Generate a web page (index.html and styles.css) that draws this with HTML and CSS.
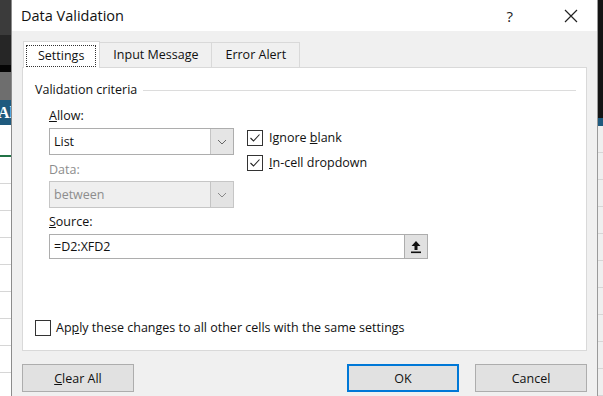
FILE: index.html
```html
<!DOCTYPE html>
<html lang="en">
<head>
    <meta charset="UTF-8">
    <title>Data Validation</title>
    <link rel="stylesheet" href="styles.css">
</head>
<body>
    <div class="screen">
        <div class="sheet sheet-left">
            <div class="band band-dark"></div>
            <div class="band band-black"></div>
            <div class="band band-line"></div>
            <div class="band band-gray"></div>
            <div class="band band-blue">Al</div>
            <div class="cells">
                <div class="cell cell-green"></div>
                <div class="cell"></div>
                <div class="cell"></div>
                <div class="cell"></div>
                <div class="cell"></div>
                <div class="cell"></div>
                <div class="cell"></div>
                <div class="cell"></div>
                <div class="cell"></div>
            </div>
        </div>

        <div class="dialog">
            <div class="titlebar">
                <span class="title">Data Validation</span>
                <div class="title-buttons">
                    <span class="help">?</span>
                    <svg class="close" width="14" height="14" viewBox="0 0 14 14">
                        <path d="M1 1L13 13M13 1L1 13" stroke="#222" stroke-width="1.2" fill="none"/>
                    </svg>
                </div>
            </div>

            <div class="dialog-body">
                <div class="tabs">
                    <div class="tab active"><span class="focus">Settings</span></div>
                    <div class="tab">Input Message</div>
                    <div class="tab">Error Alert</div>
                </div>

                <div class="panel">
                    <div class="group-title">
                        <span>Validation criteria</span>
                        <div class="rule"></div>
                    </div>

                    <div class="criteria">
                        <div class="fields">
                            <div class="label"><u>A</u>llow:</div>
                            <div class="combo">
                                <span class="combo-value">List</span>
                                <span class="combo-btn">
                                    <svg width="10" height="6" viewBox="0 0 10 6"><path d="M1 1L5 5L9 1" stroke="#666" fill="none"/></svg>
                                </span>
                            </div>
                            <div class="label label-data disabled">Data:</div>
                            <div class="combo combo-disabled">
                                <span class="combo-value">between</span>
                                <span class="combo-btn">
                                    <svg width="10" height="6" viewBox="0 0 10 6"><path d="M1 1L5 5L9 1" stroke="#888" fill="none"/></svg>
                                </span>
                            </div>
                        </div>
                        <div class="options">
                            <label class="check-row">
                                <span class="box">
                                    <svg width="12" height="12" viewBox="0 0 12 12"><path d="M1.5 6L4.5 9L10.5 2.5" stroke="#222" stroke-width="1.1" fill="none"/></svg>
                                </span>
                                <span>Ignore <u>b</u>lank</span>
                            </label>
                            <label class="check-row">
                                <span class="box">
                                    <svg width="12" height="12" viewBox="0 0 12 12"><path d="M1.5 6L4.5 9L10.5 2.5" stroke="#222" stroke-width="1.1" fill="none"/></svg>
                                </span>
                                <span><u>I</u>n-cell dropdown</span>
                            </label>
                        </div>
                    </div>

                    <div class="label label-source"><u>S</u>ource:</div>
                    <div class="source">
                        <span class="source-value">=D2:XFD2</span>
                        <span class="source-btn">
                            <svg width="12" height="14" viewBox="0 0 12 14">
                                <path d="M6 1L1.5 6H4.5V10H7.5V6H10.5Z" fill="#111"/>
                                <rect x="1" y="11.5" width="10" height="1.6" fill="#111"/>
                            </svg>
                        </span>
                    </div>

                    <label class="check-row apply">
                        <span class="box"></span>
                        <span>Ap<u>p</u>ly these changes to all other cells with the same settings</span>
                    </label>
                </div>

                <div class="actions">
                    <button class="btn"><u>C</u>lear All</button>
                    <div class="actions-right">
                        <button class="btn btn-default">OK</button>
                        <button class="btn">Cancel</button>
                    </div>
                </div>
            </div>
        </div>

        <div class="sheet sheet-right">
            <div class="band band-top"></div>
            <div class="band band-teal"></div>
            <div class="cells cells-gray">
                <div class="cell"></div>
                <div class="cell"></div>
                <div class="cell"></div>
                <div class="cell"></div>
                <div class="cell"></div>
                <div class="cell"></div>
                <div class="cell"></div>
                <div class="cell"></div>
                <div class="cell"></div>
                <div class="cell"></div>
            </div>
        </div>
    </div>
</body>
</html>
```

FILE: styles.css
```css
body {
    margin: 0;
    font-family: "Open Sans", "Noto Sans", sans-serif;
    font-size: 12.5px;
    color: #111;
    background-color: #f0f0f0;
}
.screen {
    display: flex;
    width: 603px;
    height: 396px;
    overflow: hidden;
}

/* spreadsheet peeking out behind the dialog */
.sheet {
    display: flex;
    flex-direction: column;
    overflow: hidden;
}
.sheet-left {
    width: 11px;
    border-right: 1px solid #8c8c8c;
}
.sheet-right {
    width: 5px;
}
.band-dark { height: 35px; background-color: #3b3b3b; }
.band-black { height: 30px; background-color: #262626; }
.band-line { height: 7px; background-color: #050505; }
.band-gray { height: 28px; background-color: #6e6e6e; }
.band-blue {
    height: 25px;
    background-color: #1f5a7e;
    color: #fff;
    font-family: "Liberation Serif", serif;
    font-weight: bold;
    font-size: 16px;
    line-height: 25px;
    text-indent: -2px;
    white-space: nowrap;
}
.band-top { height: 125px; background-color: #141414; }
.band-teal { height: 8px; background-color: #1f5a7e; }
.cells {
    flex: 1;
    background-color: #fff;
}
.cells-gray {
    background-color: #efefef;
}
.cell {
    height: 26px;
    border-bottom: 1px solid #d6d6d6;
}
.cell-green {
    height: 30px;
    border-bottom: 2px solid #217346;
}

/* dialog */
.dialog {
    width: 586px;
    display: flex;
    flex-direction: column;
    background-color: #f0f0f0;
    border-right: 1px solid #9a9a9a;
}
.titlebar {
    height: 31px;
    background-color: #fff;
    display: flex;
    justify-content: space-between;
    align-items: center;
    padding: 0 19px 0 9px;
}
.title {
    font-size: 14.5px;
    color: #111;
}
.title-buttons {
    display: flex;
    align-items: center;
    gap: 51px;
}
.help {
    font-size: 15px;
    color: #222;
}
.dialog-body {
    flex: 1;
    padding: 9px 10px 0 10px;
}

/* tabs */
.tabs {
    display: flex;
    align-items: flex-end;
    height: 27px;
    padding-left: 1px;
}
.tab {
    height: 24px;
    line-height: 24px;
    padding: 0 13px;
    border: 1px solid #d9d9d9;
    border-bottom: none;
    border-left: none;
    background-color: #f0f0f0;
}
.tab.active {
    height: 27px;
    background-color: #fff;
    border-left: 1px solid #d9d9d9;
    padding: 3px 3px 0 2px;
    box-sizing: border-box;
    position: relative;
    top: 1px;
}
.focus {
    display: block;
    line-height: 20px;
    padding: 0 11px;
    border: 1px dotted #333;
}

.panel {
    height: 284px;
    box-sizing: border-box;
    background-color: #fff;
    border: 1px solid #d9d9d9;
    display: flex;
    flex-direction: column;
    padding: 14px 10px 14px 12px;
}
.group-title {
    display: flex;
    align-items: center;
    gap: 6px;
    line-height: 16px;
}
.rule {
    flex: 1;
    border-top: 1px solid #dcdcdc;
}
.criteria {
    display: flex;
    gap: 13px;
    padding-left: 14px;
}
.fields {
    width: 185px;
}
.label {
    line-height: 16px;
    margin-top: 10px;
    margin-bottom: 4px;
}
.label-data {
    margin-top: 7px;
    margin-bottom: 3px;
}
.label-source {
    margin: 6px 0 4px 14px;
}
.disabled {
    color: #8d8d8d;
}
.combo {
    display: flex;
    height: 27px;
    box-sizing: border-box;
    border: 1px solid #adadad;
    background-color: #fff;
}
.combo-value {
    flex: 1;
    line-height: 25px;
    padding-left: 4px;
}
.combo-btn {
    width: 22px;
    background-color: #e5e5e5;
    border-left: 1px solid #c4c4c4;
    display: flex;
    align-items: center;
    justify-content: center;
}
.combo-disabled {
    background-color: #efefef;
    border-color: #c6c6c6;
    color: #8d8d8d;
}
.combo-disabled .combo-btn {
    background-color: #e3e3e3;
}
.options {
    padding-top: 32px;
    display: flex;
    flex-direction: column;
    gap: 9px;
}
.check-row {
    display: flex;
    align-items: center;
    gap: 6px;
    line-height: 16px;
}
.box {
    width: 14px;
    height: 14px;
    border: 1px solid #333;
    background-color: #fff;
    display: flex;
    align-items: center;
    justify-content: center;
    flex-shrink: 0;
}
.source {
    display: flex;
    width: 379px;
    height: 25px;
    box-sizing: border-box;
    margin-left: 14px;
    border: 1px solid #adadad;
}
.source-value {
    flex: 1;
    line-height: 23px;
    padding-left: 4px;
}
.source-btn {
    width: 22px;
    background-color: #e1e1e1;
    border-left: 1px solid #adadad;
    display: flex;
    align-items: center;
    justify-content: center;
}
.apply {
    margin-top: auto;
    gap: 5px;
}

/* bottom buttons */
.actions {
    display: flex;
    justify-content: space-between;
    padding-top: 13px;
}
.actions-right {
    display: flex;
    gap: 16px;
}
.btn {
    width: 112px;
    height: 28px;
    font-family: inherit;
    font-size: 12.5px;
    color: #111;
    background-color: #e1e1e1;
    border: 1px solid #adadad;
    padding: 0;
}
.btn-default {
    border: 2px solid #0078d7;
}
```
